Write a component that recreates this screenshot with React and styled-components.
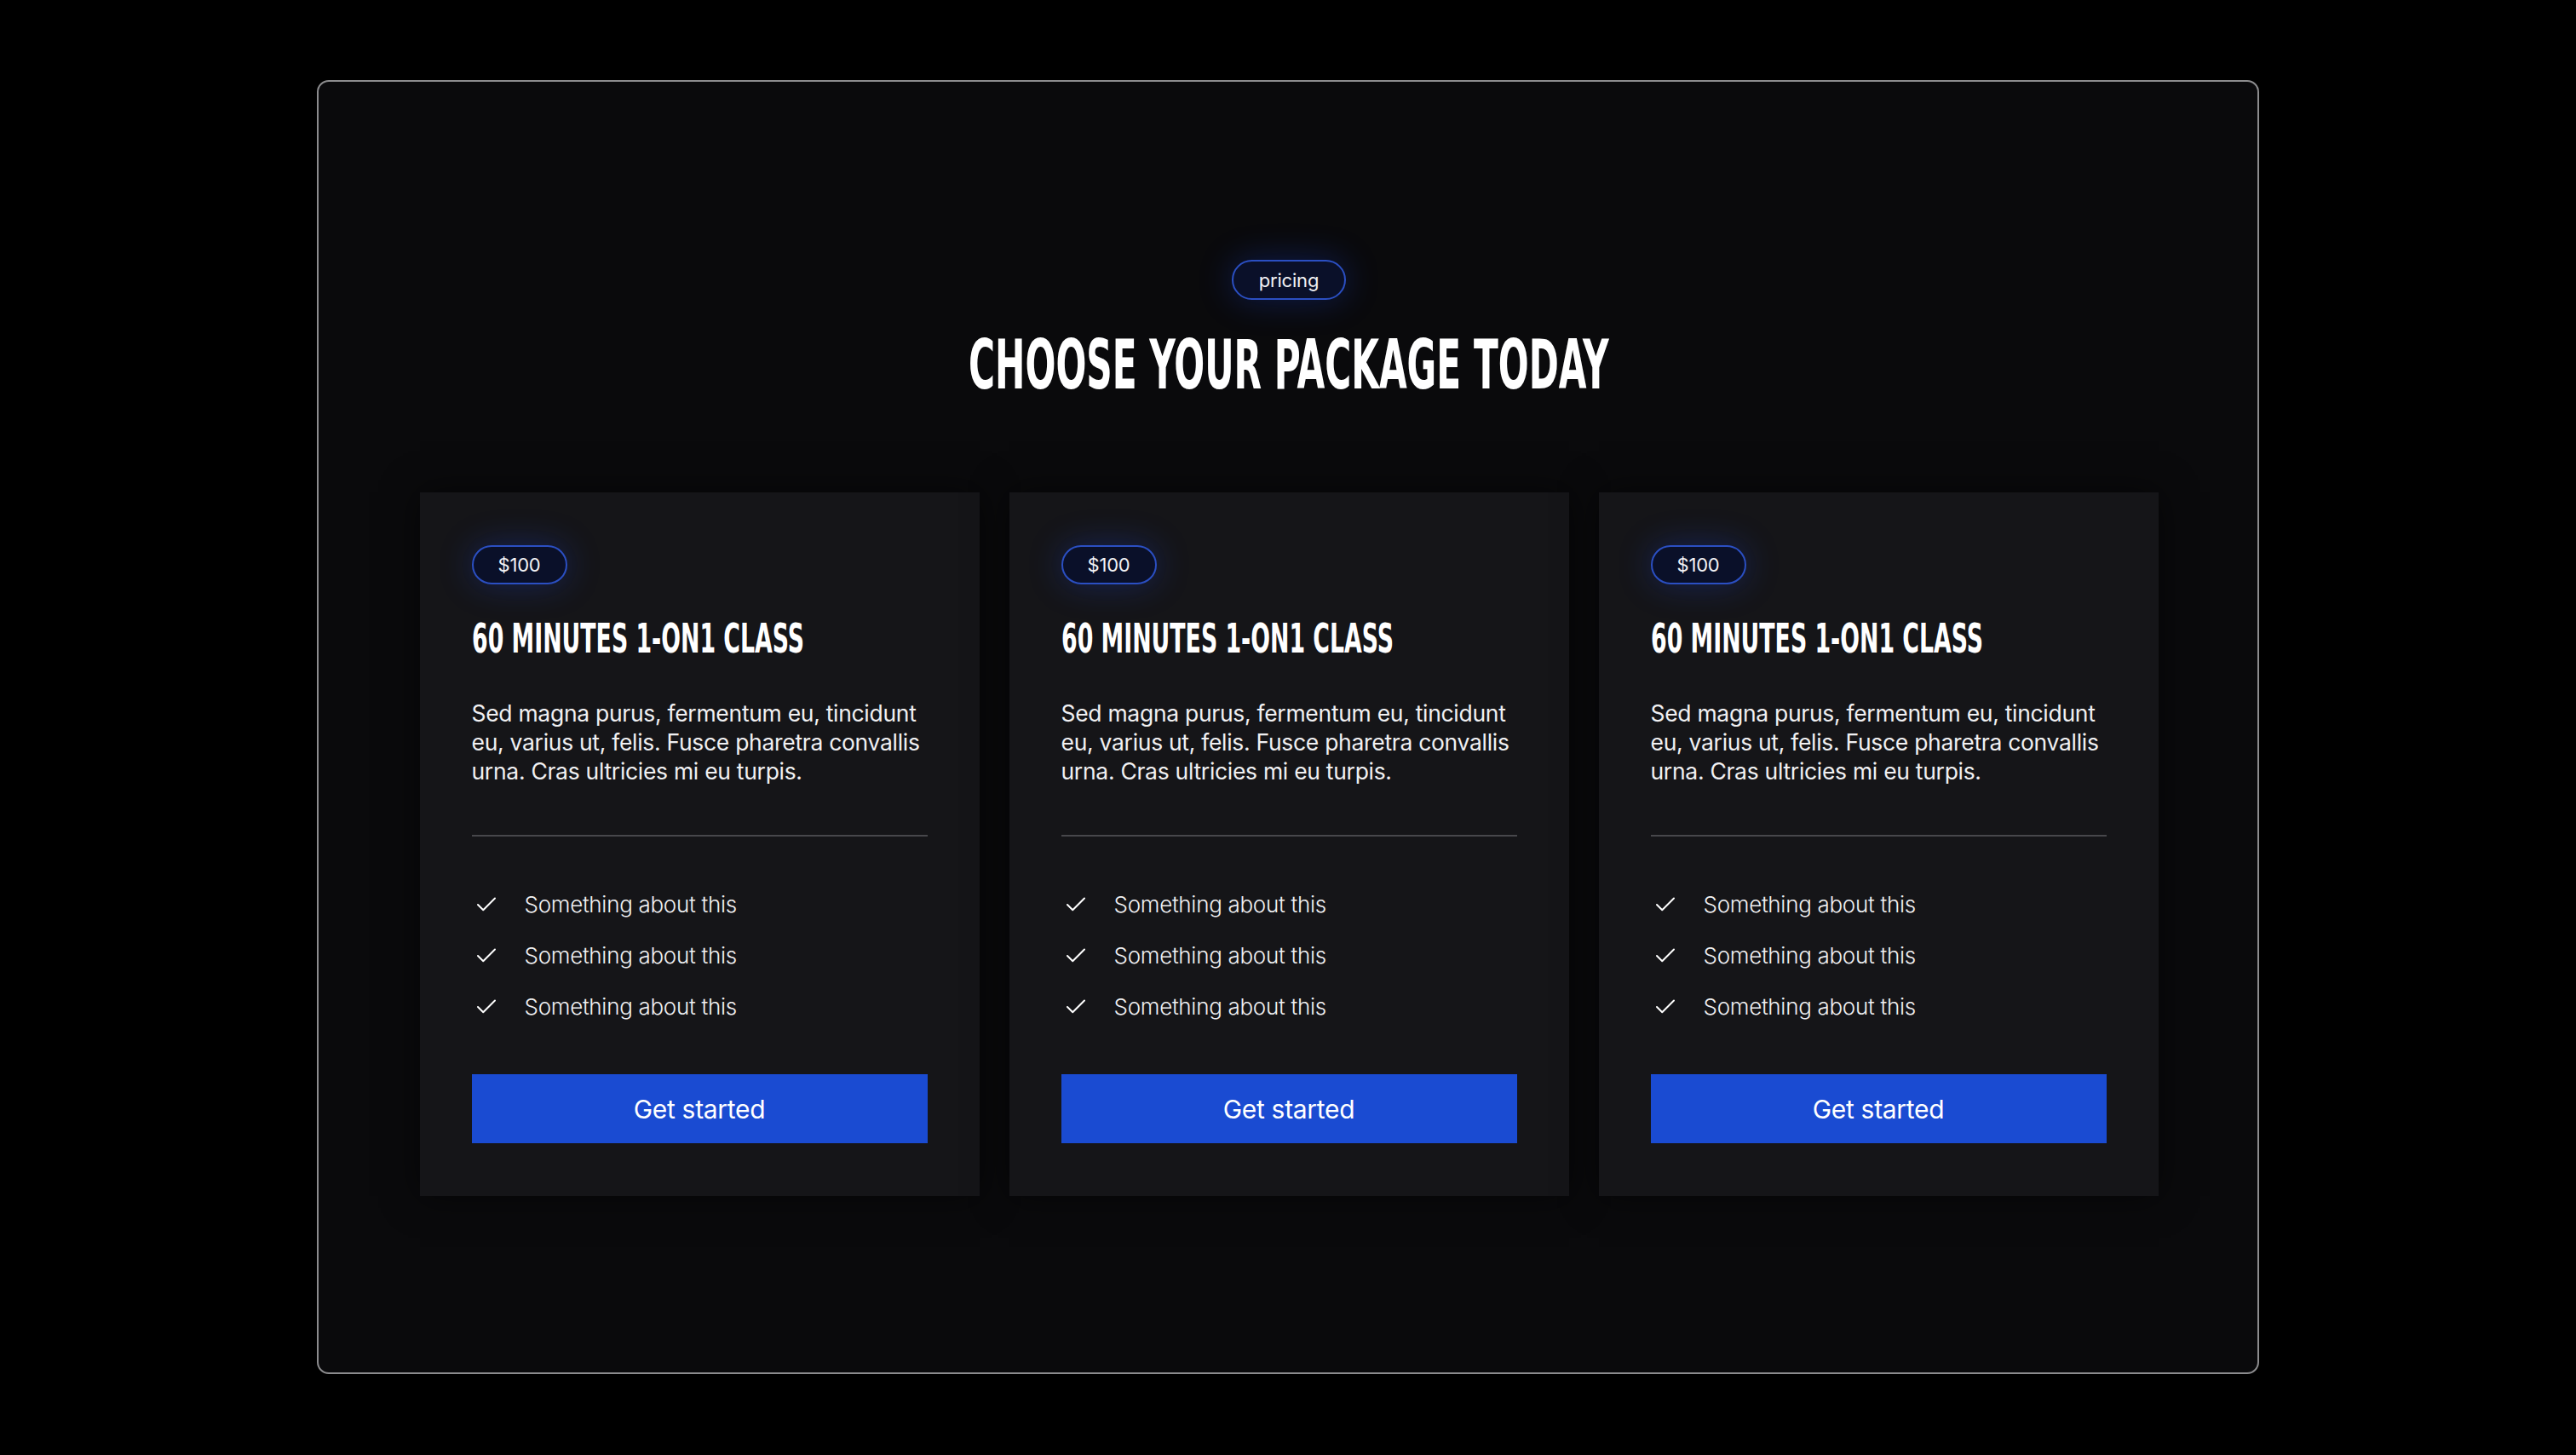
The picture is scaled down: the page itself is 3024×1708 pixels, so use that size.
import React from 'react';
import styled, { createGlobalStyle } from 'styled-components';

const GlobalStyle = createGlobalStyle`
  html, body {
    margin: 0;
    padding: 0;
    background: #000;
  }
  body {
    font-family: Inter, "Noto Sans", sans-serif;
    color: #fff;
  }
`;

const Page = styled.div`
  min-height: 100vh;
  display: flex;
  justify-content: center;
  padding-top: 94px;
  box-sizing: border-box;
`;

const Frame = styled.section`
  width: 2280px;
  height: 1519px;
  box-sizing: border-box;
  border: 2px solid #8c8c8e;
  border-radius: 14px;
  background: #0a0a0c;
  display: flex;
  flex-direction: column;
  align-items: center;
  padding: 209px 118px 0 120px;
`;

const Pill = styled.div`
  display: inline-flex;
  align-items: center;
  justify-content: center;
  box-sizing: border-box;
  height: ${(p) => p.h || 47}px;
  padding: 0 ${(p) => p.px || 30}px;
  border: 2px solid #2b4fc2;
  border-radius: 999px;
  background: #0a1029;
  box-shadow: 0 0 40px rgba(28, 70, 230, 0.3);
  font-size: ${(p) => p.fs || 22}px;
  color: #f2f2f5;
  letter-spacing: -0.2px;
`;

const Title = styled.h1`
  margin: 36px 0 0;
  font-family: "DejaVu Sans", sans-serif;
  font-weight: 700;
  font-stretch: condensed;
  font-size: 81px;
  line-height: 81px;
  white-space: nowrap;
  transform: scaleX(0.58);
`;

const Cards = styled.div`
  margin-top: 109px;
  display: grid;
  grid-template-columns: repeat(3, 657px);
  gap: 35px;
`;

const Card = styled.article`
  background: #151518;
  box-shadow: 0 0 40px rgba(0, 0, 0, 0.55);
  padding: 62px 61px 62px;
  display: flex;
  flex-direction: column;
  align-items: flex-start;
`;

const CardTitle = styled.h2`
  margin: 39px 0 0;
  font-family: "DejaVu Sans", sans-serif;
  font-weight: 700;
  font-stretch: condensed;
  font-size: 48px;
  line-height: 48px;
  white-space: nowrap;
  transform: scaleX(0.62);
  transform-origin: left center;
`;

const Desc = styled.p`
  margin: 47px 0 0;
  font-size: 26.5px;
  line-height: 34px;
  color: #f0f0f2;
  letter-spacing: -0.3px;
`;

const Divider = styled.hr`
  width: 100%;
  margin: 58px 0 0;
  border: 0;
  height: 2px;
  background: #47474b;
`;

const List = styled.ul`
  list-style: none;
  margin: 63px 0 0;
  padding: 0;
  display: flex;
  flex-direction: column;
  gap: 26px;
`;

const Item = styled.li`
  display: flex;
  align-items: center;
  gap: 30px;
  font-size: 26px;
  line-height: 34px;
  font-weight: 300;
  color: #f0f0f2;
  letter-spacing: -0.3px;
`;

const Tick = styled.svg`
  width: 30px;
  height: 30px;
  flex: none;
  margin-left: 2px;
`;

const Button = styled.button`
  margin-top: 62px;
  width: 100%;
  height: 81px;
  border: 0;
  background: #1a4bd2;
  color: #fff;
  font-family: Inter, "Noto Sans", sans-serif;
  font-size: 30px;
  letter-spacing: -0.3px;
  cursor: pointer;
`;

const Check = () => (
  <Tick viewBox="0 0 24 24" fill="none" stroke="#fff" strokeWidth="1.6" strokeLinecap="round" strokeLinejoin="round">
    <path d="M20 6 9 17l-5-5" />
  </Tick>
);

const plans = [1, 2, 3].map((id) => ({
  id,
  price: '$100',
  name: '60 MINUTES 1-ON1 CLASS',
  desc: 'Sed magna purus, fermentum eu, tincidunt eu, varius ut, felis. Fusce pharetra convallis urna. Cras ultricies mi eu turpis.',
  features: ['Something about this', 'Something about this', 'Something about this'],
}));

const App = () => (
  <>
    <GlobalStyle />
    <Page>
      <Frame>
        <Pill>pricing</Pill>
        <Title>CHOOSE YOUR PACKAGE TODAY</Title>
        <Cards>
          {plans.map((plan) => (
            <Card key={plan.id}>
              <Pill h={46} px={29}>{plan.price}</Pill>
              <CardTitle>{plan.name}</CardTitle>
              <Desc>{plan.desc}</Desc>
              <Divider />
              <List>
                {plan.features.map((f, i) => (
                  <Item key={i}>
                    <Check />
                    {f}
                  </Item>
                ))}
              </List>
              <Button>Get started</Button>
            </Card>
          ))}
        </Cards>
      </Frame>
    </Page>
  </>
);

export default App;
